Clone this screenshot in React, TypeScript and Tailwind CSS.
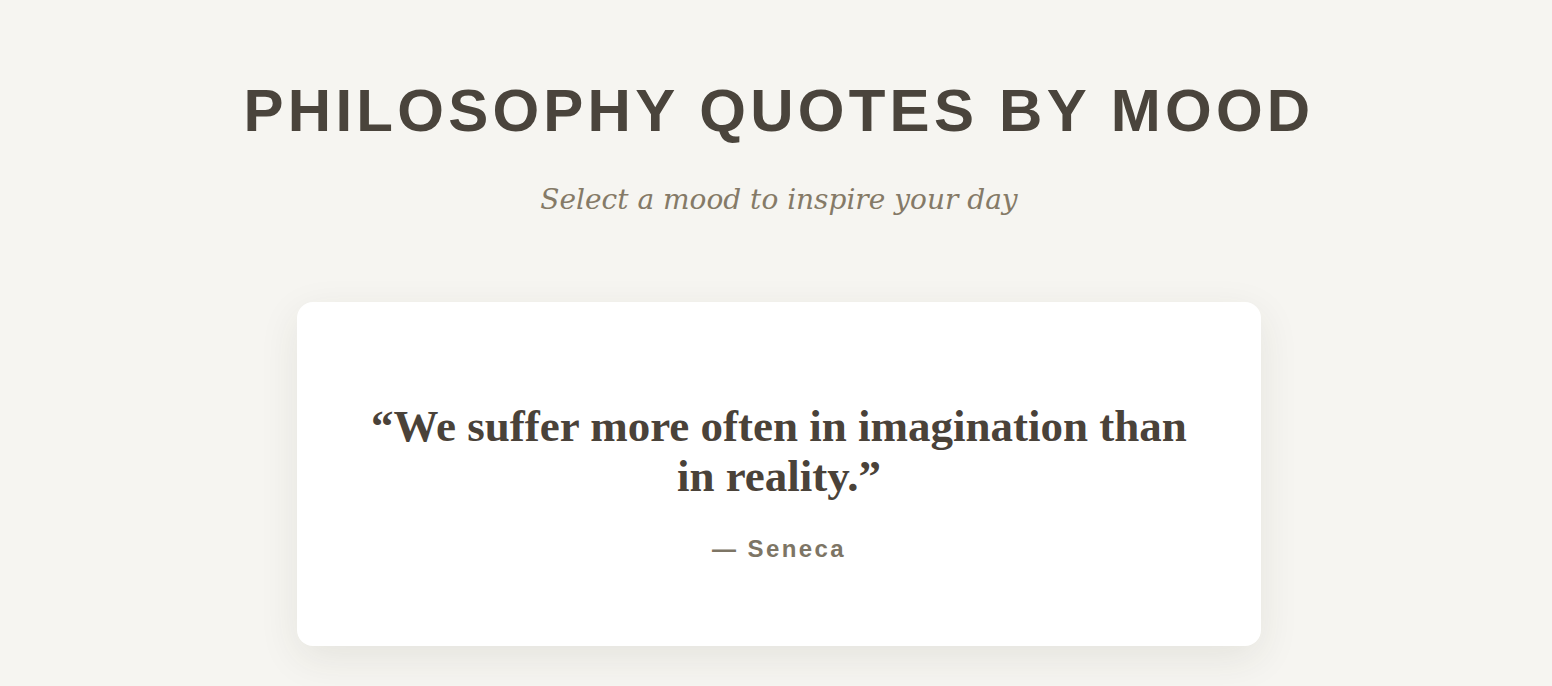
import React from 'react';

export default function App() {
  return (
    <div className="min-h-screen bg-[#f6f5f1] flex flex-col items-center pt-[81px] pl-[6px]">
      <h1 className="text-[60px] leading-none font-bold tracking-[4.25px] text-[#4a443c] font-['Liberation_Sans',Arial,sans-serif]">
        PHILOSOPHY QUOTES BY MOOD
      </h1>
      <p className="mt-[38px] text-[28px] italic text-[#857a67] font-['DejaVu_Serif',Georgia,serif]">
        Select a mood to inspire your day
      </p>

      <div className="mt-[81px] w-[964px] bg-white rounded-2xl shadow-[0_12px_40px_rgba(60,50,30,0.09)] px-16 pt-[100px] pb-[79px] flex flex-col items-center">
        <blockquote className="text-[45px] leading-[1.1] font-bold text-center text-[#4a4239] font-['Liberation_Serif','Times_New_Roman',serif]">
          “We suffer more often in imagination than in reality.”
        </blockquote>
        <p className="mt-[30px] text-[24px] font-bold tracking-[2.4px] text-[#7d7565] font-['Liberation_Sans',Arial,sans-serif]">
          — Seneca
        </p>
      </div>
    </div>
  );
}
